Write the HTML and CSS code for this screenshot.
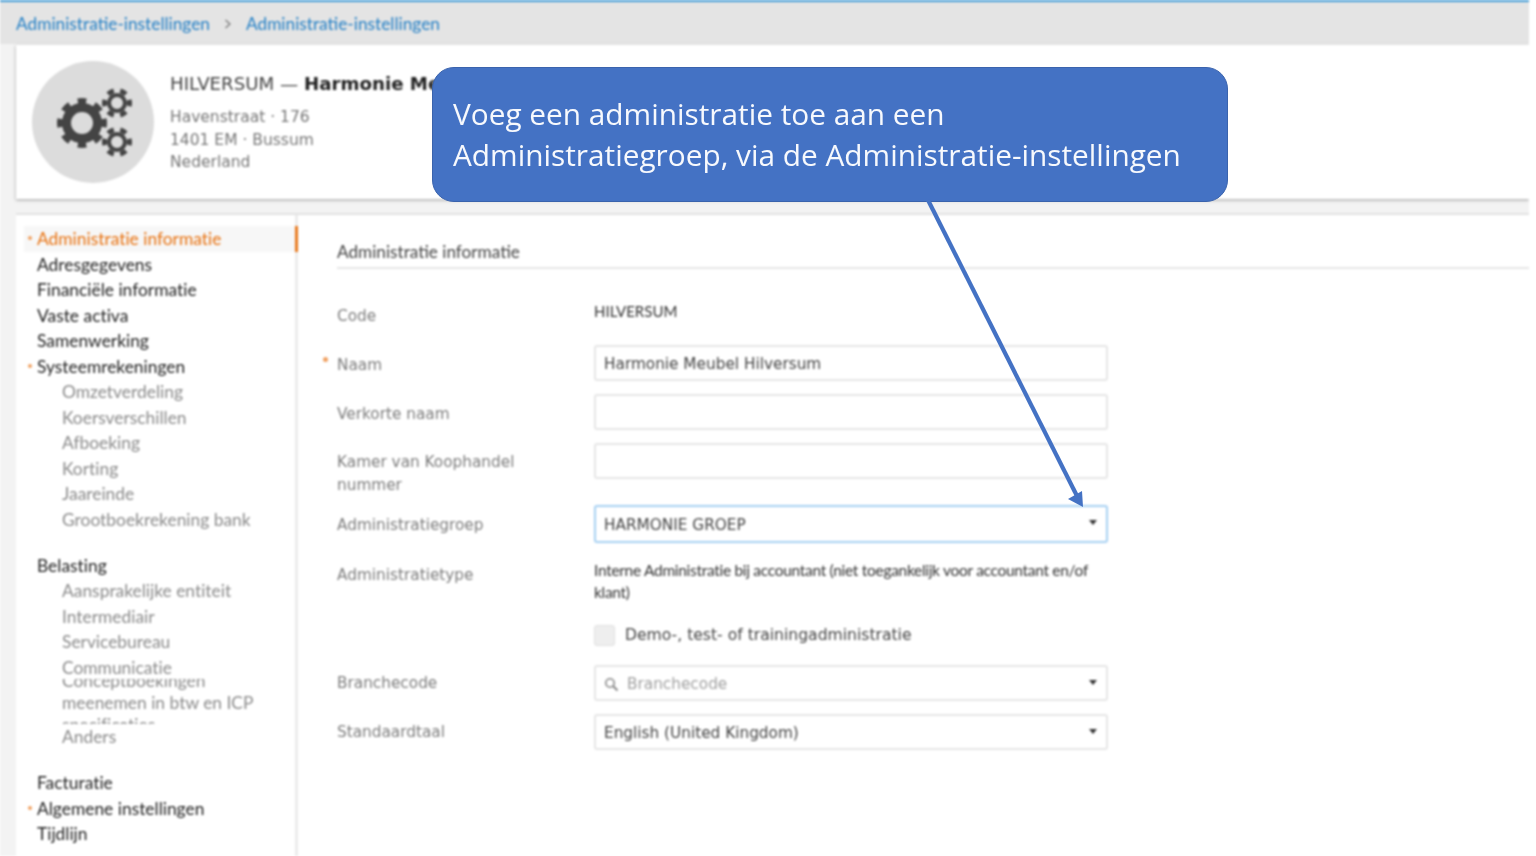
FILE: index.html
```html
<!DOCTYPE html>
<html lang="nl">
<head>
<meta charset="utf-8">
<title>Administratie-instellingen</title>
<link rel="stylesheet" href="styles.css">
</head>
<body>
<div class="page">
  <nav class="crumbs">
    <a class="crumb">Administratie-instellingen</a>
    <svg class="crumb-sep" width="8" height="10" viewBox="0 0 8 10"><path d="M1.5 1 L6 5 L1.5 9" fill="none" stroke="#777" stroke-width="1.2"/></svg>
    <a class="crumb">Administratie-instellingen</a>
  </nav>
  <header class="card">
    <div class="avatar">
      <svg width="122" height="122" viewBox="0 0 122 122">
        <g fill="none" stroke="#444">
          <circle cx="50" cy="62" r="15.5" stroke-width="9"/>
          <circle cx="50" cy="62" r="22" stroke-width="6" pathLength="80" stroke-dasharray="5 5" stroke-dashoffset="2.5"/>
          <circle cx="85" cy="42" r="8" stroke-width="4"/>
          <circle cx="85" cy="42" r="12.5" stroke-width="5" pathLength="60" stroke-dasharray="5 5" stroke-dashoffset="2.5"/>
          <circle cx="85" cy="81" r="8" stroke-width="4"/>
          <circle cx="85" cy="81" r="12.5" stroke-width="5" pathLength="60" stroke-dasharray="5 5" stroke-dashoffset="2.5"/>
        </g>
      </svg>
    </div>
    <div class="org">
      <div class="org-title">HILVERSUM — <b>Harmonie Meubel Hilversum</b></div>
      <div class="org-line">Havenstraat · 176</div>
      <div class="org-line">1401 EM · Bussum</div>
      <div class="org-line">Nederland</div>
    </div>
  </header>
  <main class="panel">
    <aside class="side">
      <a class="item main active req">Administratie informatie</a>
      <a class="item main">Adresgegevens</a>
      <a class="item main">Financiële informatie</a>
      <a class="item main">Vaste activa</a>
      <a class="item main">Samenwerking</a>
      <a class="item main req">Systeemrekeningen</a>
      <a class="item sub">Omzetverdeling</a>
      <a class="item sub">Koersverschillen</a>
      <a class="item sub">Afboeking</a>
      <a class="item sub">Korting</a>
      <a class="item sub">Jaareinde</a>
      <a class="item sub">Grootboekrekening bank</a>
      <a class="item main gap">Belasting</a>
      <a class="item sub">Aansprakelijke entiteit</a>
      <a class="item sub">Intermediair</a>
      <a class="item sub">Servicebureau</a>
      <a class="item sub">Communicatie</a>
      <div class="clip"><div class="clip-text">Conceptboekingen meenemen in btw en ICP specificaties</div></div>
      <a class="item sub">Anders</a>
      <a class="item main gap">Facturatie</a>
      <a class="item main req">Algemene instellingen</a>
      <a class="item main">Tijdlijn</a>
    </aside>
    <section class="content">
      <h2 class="section-title">Administratie informatie</h2>
      <div class="row row-code"><span class="label">Code</span><span class="value">HILVERSUM</span></div>
      <div class="row row-field"><span class="label req-label">Naam</span><div class="field">Harmonie Meubel Hilversum</div></div>
      <div class="row row-field"><span class="label">Verkorte naam</span><div class="field"></div></div>
      <div class="row row-field row-kvk"><span class="label">Kamer van Koophandel nummer</span><div class="field"></div></div>
      <div class="row row-group"><span class="label">Administratiegroep</span><div class="field focus">HARMONIE GROEP<i class="caret"></i></div></div>
      <div class="row row-type"><span class="label">Administratietype</span><span class="value type">Interne Administratie bij accountant (niet toegankelijk voor accountant en/of klant)</span></div>
      <div class="row row-check"><span class="label"></span><div class="check"><i class="box"></i><span>Demo-, test- of trainingadministratie</span></div></div>
      <div class="row row-field row-lower"><span class="label">Branchecode</span><div class="field muted">
        <svg class="search" width="15" height="15" viewBox="0 0 15 15"><circle cx="6" cy="6" r="4.2" fill="none" stroke="#888" stroke-width="1.6"/><path d="M9 9 L13.5 13.5" stroke="#888" stroke-width="2"/></svg>Branchecode<i class="caret"></i></div></div>
      <div class="row row-field row-lower"><span class="label">Standaardtaal</span><div class="field">English (United Kingdom)<i class="caret"></i></div></div>
    </section>
  </main>
</div>
<div class="callout">Voeg een administratie toe aan een<br>Administratiegroep, via de Administratie-instellingen</div>
<svg class="arrow" width="1536" height="856" viewBox="0 0 1536 856">
  <path d="M928 200 L1077 496" fill="none" stroke="#4472c4" stroke-width="4.2"/>
  <path d="M1083 507 L1068 499 L1082 491 Z" fill="#4472c4"/>
</svg>
</body>
</html>
```
FILE: styles.css
```css
* { box-sizing: border-box; }
html, body { margin: 0; height: 856px; overflow: hidden; background: #fff; }
body { position: relative; font-family: "DejaVu Sans", sans-serif; }

.page {
  width: 1529px;
  height: 856px;
  overflow: hidden;
  background: #f3f3f3;
  border-top: 2px solid #3d9ad6;
  filter: blur(0.8px);
  font-variant-ligatures: none;
}

.crumbs {
  height: 42px;
  background: #e4e4e4;
  display: flex;
  align-items: center;
  gap: 14px;
  padding: 1px 0 0 16px;
  font: 17.3px "Lato", sans-serif;
  color: #2480c6;
}
.crumb-sep { margin-top: 1px; }

.card {
  margin: 1px 0 0 16px;
  height: 154px;
  background: #fff;
  box-shadow: 0 1px 3px rgba(0,0,0,.35);
  display: flex;
  align-items: center;
  padding: 0 0 0 16px;
  gap: 16px;
}
.avatar {
  width: 122px;
  height: 122px;
  border-radius: 50%;
  background: #dcdcdc;
  flex: none;
}
.org { padding-top: 3px; }
.org-title { font-size: 18.2px; color: #444; line-height: 22px; margin-bottom: 11px; }
.org-title b { color: #222; }
.org-line { font-size: 15.5px; color: #777; line-height: 22.5px; }

.panel {
  margin: 14px 0 0 16px;
  height: 660px;
  background: #fff;
  border-top: 2px solid #e2e2e2;
  display: flex;
}
.side {
  width: 282px;
  flex: none;
  border-right: 3px solid #ececec;
  padding: 11px 0 0 8px;
  font-family: "Lato", sans-serif;
  position: relative;
}
.item { display: block; height: 25.5px; line-height: 25.5px; white-space: nowrap; font-size: 17.4px; position: relative; }
.main { padding-left: 13px; color: #1f1f1f; }
.sub { padding-left: 38px; color: #8a8a8a; }
.gap { margin-top: 20.5px; }
.active { color: #e8710f; background: #f7f7f7; margin-right: -3px; border-right: 3px solid #e8791e; }
.req::before {
  content: "";
  position: absolute;
  left: 4px;
  top: 10px;
  width: 4px;
  height: 4px;
  border-radius: 50%;
  background: #f0a060;
}
.clip {
  height: 45px;
  margin: -1px 0 0.25px;
  overflow: hidden;
  padding-left: 38px;
  color: #8a8a8a;
  font-size: 17.4px;
  line-height: 22px;
}
.clip-text { margin-top: -9px; width: 215px; }

.content { flex: 1; padding: 24px 0 0 39px; color: #7c7c7c; font-size: 15.3px; }
.section-title {
  margin: 0;
  height: 30px;
  font: 400 17.2px/25px "Lato", sans-serif;
  color: #444;
  border-bottom: 2px solid #e6e6e6;
}
.row { display: flex; align-items: flex-start; }
.label { width: 257px; flex: none; position: relative; line-height: 23px; padding-right: 50px; }
.req-label::before {
  content: "";
  position: absolute;
  left: -14px;
  top: 12px;
  width: 5px;
  height: 5px;
  border-radius: 50%;
  background: #f0a060;
}
.value { color: #333; font: 15px/22px "Lato", sans-serif; }
.row-code { height: 76px; padding-top: 34px; }
.row-code .label { padding-top: 2px; }
.row-code .value { margin-top: -3px; }
.row-field { height: 49px; }
.row-field .label { padding-top: 9px; }
.row-kvk { height: 62px; }
.row-kvk .label { padding-top: 8px; }
.row-group { height: 54px; }
.row-group .label { padding-top: 9px; }
.row-lower .label { padding-top: 7px; }
.field {
  width: 514px;
  height: 36px;
  border: 2px solid #e6e6e6;
  border-radius: 3px;
  background: #fff;
  color: #444;
  font-size: 15.3px;
  display: flex;
  align-items: center;
  padding: 2px 8px 0;
}
.focus { height: 38px; border-color: #a6d0f2; padding-top: 1px; }
.muted { color: #a0a0a0; }
.search { margin-right: 8px; flex: none; }
.caret {
  margin-left: auto;
  margin-right: 1px;
  width: 0;
  height: 0;
  border: 4px solid transparent;
  border-top: 5px solid #333;
  border-bottom: 0;
  margin-top: -4px;
}
.row-type { height: 65px; }
.row-type .label { padding-top: 5px; }
.type { width: 510px; font-size: 15.5px; letter-spacing: -0.3px; }
.row-check { height: 41px; }
.check { display: flex; align-items: center; gap: 10px; color: #444; height: 22px; font-size: 15.6px; }
.box { width: 21px; height: 21px; border-radius: 3px; background: #eee; border: 1px solid #e0e0e0; flex: none; }

.callout {
  position: absolute;
  left: 432px;
  top: 67px;
  width: 796px;
  height: 135px;
  background: #4472c4;
  border: 1px solid #3a63ad;
  border-radius: 22px;
  color: #f7f9fd;
  font: 29.8px/41px "Open Sans", sans-serif;
  padding: 25px 0 0 20px;
  white-space: nowrap;
  filter: blur(0.5px);
}
.arrow { position: absolute; left: 0; top: 0; pointer-events: none; filter: blur(0.4px); }
```
